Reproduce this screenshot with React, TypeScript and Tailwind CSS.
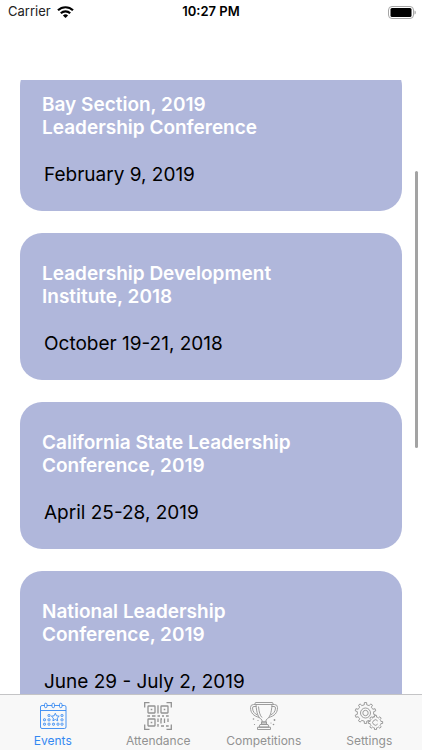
import React from "react";

type EventItem = { title: [string, string]; date: string };

const events: EventItem[] = [
  { title: ["Bay Section, 2019", "Leadership Conference"], date: "February 9, 2019" },
  { title: ["Leadership Development", "Institute, 2018"], date: "October 19-21, 2018" },
  { title: ["California State Leadership", "Conference, 2019"], date: "April 25-28, 2019" },
  { title: ["National Leadership", "Conference, 2019"], date: "June 29 - July 2, 2019" },
];

function gearPath(cx: number, cy: number, outer: number, inner: number, teeth: number) {
  const step = (Math.PI * 2) / teeth;
  const pt = (r: number, a: number) =>
    `${(cx + r * Math.cos(a)).toFixed(2)} ${(cy + r * Math.sin(a)).toFixed(2)}`;
  let d = "";
  for (let i = 0; i < teeth; i++) {
    const a = i * step - Math.PI / 2;
    d += `${i === 0 ? "M" : "L"}${pt(inner, a - step * 0.25)}`;
    d += `L${pt(outer, a - step * 0.17)}L${pt(outer, a + step * 0.17)}`;
    d += `L${pt(inner, a + step * 0.25)}`;
    d += `A${inner} ${inner} 0 0 1 ${pt(inner, a + step * 0.75)}`;
  }
  return d + "Z";
}

function WifiIcon() {
  return (
    <svg viewBox="0 0 17 12" className="h-3 w-[17px]" aria-hidden="true">
      <g fill="none" stroke="#000" strokeWidth="2.2">
        <path d="M1 4.3a10.8 10.8 0 0 1 15 0" />
        <path d="M3.8 7.2a6.8 6.8 0 0 1 9.4 0" />
      </g>
      <path d="M8.5 12 5.9 9.4a3.8 3.8 0 0 1 5.2 0Z" />
    </svg>
  );
}

function BatteryIcon() {
  return (
    <svg viewBox="0 0 28 13" className="h-[13px] w-7" aria-hidden="true">
      <rect x="0.5" y="0.5" width="25" height="12" rx="3.5" fill="none" stroke="#a6a6a6" />
      <rect x="2.5" y="2" width="21" height="9" rx="1.5" />
      <path d="M26.500 4.500c1 .3 1.300 1 1.300 2s-.3 1.700-1.300 2Z" fill="#a6a6a6" />
    </svg>
  );
}

function CalendarIcon() {
  const cells = [
    [10, 13.5], [23, 13.5],
    [5.5, 17.8], [10, 17.8], [23, 17.8],
    [5.5, 22.2], [10, 22.2], [14.5, 22.2], [19, 22.2], [23, 22.2],
  ];
  return (
    <svg viewBox="0 0 28 28" className="size-7" fill="none" stroke="currentColor" strokeWidth="0.9" aria-hidden="true">
      <path d="M5.500 3.500H3Q1.500 3.500 1.500 5V25Q1.500 26.500 3 26.500H25.500Q27 26.500 27 25V5Q27 3.500 25.500 3.500H23M8 3.500H13M15.500 3.500H20.500M1.500 8.500H27" />
      <rect x="5.500" y="1.200" width="2.500" height="4.500" rx="1.250" />
      <rect x="13" y="1.200" width="2.500" height="4.500" rx="1.250" />
      <rect x="20.500" y="1.200" width="2.500" height="4.500" rx="1.250" />
      {cells.map(([x, y]) => (
        <rect key={`${x}-${y}`} x={x - 1} y={y - 1} width="2" height="2" rx="0.500" />
      ))}
      <path d="m16.300 11.300 1.200 2.500 2.700.4-2 1.900.5 2.700-2.400-1.300-2.400 1.300.5-2.700-2-1.900 2.700-.4Z" />
    </svg>
  );
}

function QrIcon() {
  return (
    <svg viewBox="0 0 28 28" className="size-7" fill="none" stroke="currentColor" strokeWidth="1.300" aria-hidden="true">
      <path d="M0.700 5.500V0.700H5.500M22.500 0.700H27.300V5.500M27.300 22.500V27.300H22.500M5.500 27.300H0.700V22.500" />
      <rect x="4" y="4" width="7" height="7" rx="0.500" />
      <rect x="17" y="4" width="7" height="7" rx="0.500" />
      <rect x="4" y="17" width="7" height="7" rx="0.500" />
      <path d="M6.700 7.500H8.300M19.700 7.500H21.300M6.700 20.500H8.300" strokeWidth="1.600" />
      <path d="M14 3.300V11.500M3.300 14H6M8 14H11.500M13.500 14H16M18 14H20M22 14H24.700M14 16.500V20M14 22V24.700M17 21.500V17H18M20.500 16.500V21M24 16.500V20M17 24H20M22 24H24.700" />
    </svg>
  );
}

function TrophyIcon() {
  return (
    <svg viewBox="0 0 30 28" className="h-7 w-[30px]" fill="none" stroke="currentColor" strokeWidth="0.900" aria-hidden="true">
      <rect x="6" y="0.500" width="18" height="2" rx="1" />
      <path d="M7 2.500C7.500 11 9 15.500 13 18V20H17V18C21 15.500 22.500 11 23 2.500M9.500 4.500C10 10 11 13.500 13 15.500" />
      <path d="M6.500 2.500H4.500Q1.500 2.500 1.500 5.500C1.500 11 4.500 14 10.500 15.500M7.300 4.500H5Q3.500 4.500 3.500 6C3.700 9.500 5.500 11.800 8.500 13" />
      <path d="M23.500 2.500H25.500Q28.500 2.500 28.500 5.500C28.500 11 25.500 14 19.500 15.500M22.700 4.500H25Q26.500 4.500 26.500 6C26.300 9.500 24.500 11.800 21.500 13" />
      <path d="M12.500 20H17.500V22H12.500ZM11 22.500H19L20 25H10ZM8.500 25.300H21.500V27.500H8.500Z" />
      <g fill="currentColor" stroke="none">
        <circle cx="4.500" cy="17" r=".8" />
        <circle cx="9" cy="18.500" r=".6" />
        <circle cx="5.500" cy="22.500" r=".6" />
        <circle cx="25.500" cy="18" r=".9" />
        <circle cx="22" cy="21" r=".6" />
        <circle cx="24.500" cy="22.500" r=".8" />
      </g>
    </svg>
  );
}

function GearsIcon() {
  return (
    <svg viewBox="0 0 30 28" className="h-7 w-[30px]" fill="none" stroke="currentColor" strokeWidth="0.900" strokeLinejoin="round" aria-hidden="true">
      <path d={gearPath(11.5, 11, 10.5, 8.2, 10)} />
      <circle cx="11.500" cy="11" r="5" />
      <circle cx="11.500" cy="11" r="2.700" />
      <path d={gearPath(21.5, 20.5, 7.2, 5.5, 8)} fill="#f8f8f8" />
      <path d="M23.700 19a2.700 2.700 0 1 0 0 3" />
    </svg>
  );
}

const tabs = [
  { label: "Events", Icon: CalendarIcon, active: true },
  { label: "Attendance", Icon: QrIcon, active: false },
  { label: "Competitions", Icon: TrophyIcon, active: false },
  { label: "Settings", Icon: GearsIcon, active: false },
];

export default function App() {
  return (
    <div className="flex h-screen flex-col bg-white font-['Inter',sans-serif] text-black">
      <header className="h-20 shrink-0">
        <div className="grid h-6 grid-cols-3 items-center px-2">
          <div className="flex items-center gap-1.5 text-[13px] text-[#222]">
            <span>Carrier</span>
            <WifiIcon />
          </div>
          <time className="text-center text-[13px] font-semibold">10:27 PM</time>
          <div className="-mr-0.5 flex justify-end">
            <BatteryIcon />
          </div>
        </div>
      </header>

      <main className="relative min-h-0 flex-1 overflow-hidden">
        <ul className="-mt-4 flex flex-col gap-[22px] px-5">
          {events.map((event) => (
            <li key={event.date} className="rounded-[22px] bg-[#b0b7db] px-[22px] pt-[29px] pb-6">
              <h2 className="text-[19px] leading-[23px] font-semibold text-white">
                {event.title[0]}
                <br />
                {event.title[1]}
              </h2>
              <p className="mt-6 pl-0.5 text-[19px] leading-6">{event.date}</p>
            </li>
          ))}
        </ul>
        <div className="absolute top-[91px] right-1 h-[277px] w-[3px] rounded-full bg-[#a3a3a3]" />
      </main>

      <nav className="grid h-14 shrink-0 grid-cols-4 border-t border-[#c4c4c6] bg-[#f8f8f8]">
        {tabs.map(({ label, Icon, active }) => (
          <button
            key={label}
            type="button"
            aria-current={active ? "page" : undefined}
            className={`flex flex-col items-center gap-1 pt-[7px] text-[12px] leading-[14px] ${
              active ? "text-[#3488f2]" : "text-[#929292]"
            }`}
          >
            <Icon />
            <span>{label}</span>
          </button>
        ))}
      </nav>
    </div>
  );
}
